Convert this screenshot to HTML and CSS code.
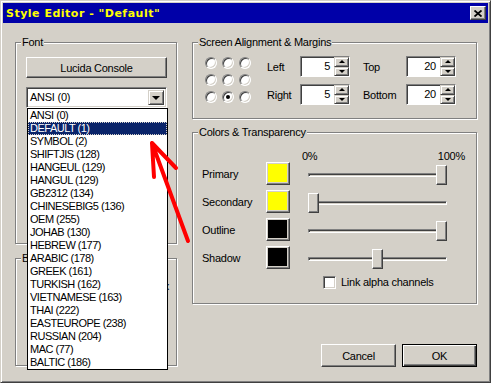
FILE: index.html
```html
<!DOCTYPE html>
<html>
<head>
    <title>Style Editor</title>
    <link rel="stylesheet" href="styles.css">
</head>
<body>
    <div class="window">
        <div class="titlebar">
            <span class="title">Style Editor - "Default"</span>
            <button class="close" type="button">
                <svg width="8" height="7" viewBox="0 0 8 7"><path d="M0.5 0.5l7 6M7.5 0.5l-7 6" stroke="#000" stroke-width="1.8"/></svg>
            </button>
        </div>

        <div class="client">
            <div class="col-left">
                <div class="group font-group">
                    <span class="group-title">Font</span>
                    <button class="btn font-btn" type="button">Lucida Console</button>
                    <div class="combo">
                        <span class="combo-value">ANSI (0)</span>
                        <span class="combo-arrow"><i class="tri-down"></i></span>
                    </div>
                </div>
                <div class="group border-group">
                    <span class="group-title">Border Style</span>
                    <div class="border-row"><span>Opaque box</span></div>
                </div>
            </div>

            <div class="col-right">
                <div class="group screen-group">
                    <span class="group-title">Screen Alignment &amp; Margins</span>
                    <div class="radio-grid">
                        <span class="radio"></span><span class="radio"></span><span class="radio"></span>
                        <span class="radio"></span><span class="radio"></span><span class="radio"></span>
                        <span class="radio"></span><span class="radio checked"></span><span class="radio"></span>
                    </div>
                    <div class="spin-grid">
                        <span class="lbl">Left</span>
                        <div class="spin"><span class="spin-value">5</span><span class="spin-btns"><span class="spin-btn"><i class="tri-up"></i></span><span class="spin-btn"><i class="tri-dn"></i></span></span></div>
                        <span class="lbl lbl-2">Top</span>
                        <div class="spin"><span class="spin-value">20</span><span class="spin-btns"><span class="spin-btn"><i class="tri-up"></i></span><span class="spin-btn"><i class="tri-dn"></i></span></span></div>
                        <span class="lbl">Right</span>
                        <div class="spin"><span class="spin-value">5</span><span class="spin-btns"><span class="spin-btn"><i class="tri-up"></i></span><span class="spin-btn"><i class="tri-dn"></i></span></span></div>
                        <span class="lbl lbl-2">Bottom</span>
                        <div class="spin"><span class="spin-value">20</span><span class="spin-btns"><span class="spin-btn"><i class="tri-up"></i></span><span class="spin-btn"><i class="tri-dn"></i></span></span></div>
                    </div>
                </div>

                <div class="group colors-group">
                    <span class="group-title">Colors &amp; Transparency</span>
                    <div class="pct-row"><span>0%</span><span>100%</span></div>
                    <div class="color-rows">
                        <div class="color-row">
                            <span class="color-name">Primary</span>
                            <span class="swatch"><i style="background: #ffff00"></i></span>
                            <div class="slider"><span class="track"></span><span class="thumb" style="left: 128px"></span></div>
                        </div>
                        <div class="color-row">
                            <span class="color-name">Secondary</span>
                            <span class="swatch"><i style="background: #ffff00"></i></span>
                            <div class="slider"><span class="track"></span><span class="thumb" style="left: 0px"></span></div>
                        </div>
                        <div class="color-row">
                            <span class="color-name">Outline</span>
                            <span class="swatch"><i style="background: #000000"></i></span>
                            <div class="slider"><span class="track"></span><span class="thumb" style="left: 128px"></span></div>
                        </div>
                        <div class="color-row">
                            <span class="color-name">Shadow</span>
                            <span class="swatch"><i style="background: #000000"></i></span>
                            <div class="slider"><span class="track"></span><span class="thumb" style="left: 64px"></span></div>
                        </div>
                    </div>
                    <label class="check-row"><span class="checkbox"></span>Link alpha channels</label>
                </div>

                <div class="dialog-buttons">
                    <button class="btn" type="button">Cancel</button>
                    <button class="btn default" type="button">OK</button>
                </div>
            </div>
        </div>

        <ul class="dropdown">
            <li>ANSI (0)</li>
            <li class="selected">DEFAULT (1)</li>
            <li>SYMBOL (2)</li>
            <li>SHIFTJIS (128)</li>
            <li>HANGEUL (129)</li>
            <li>HANGUL (129)</li>
            <li>GB2312 (134)</li>
            <li>CHINESEBIG5 (136)</li>
            <li>OEM (255)</li>
            <li>JOHAB (130)</li>
            <li>HEBREW (177)</li>
            <li>ARABIC (178)</li>
            <li>GREEK (161)</li>
            <li>TURKISH (162)</li>
            <li>VIETNAMESE (163)</li>
            <li>THAI (222)</li>
            <li>EASTEUROPE (238)</li>
            <li>RUSSIAN (204)</li>
            <li>MAC (77)</li>
            <li>BALTIC (186)</li>
        </ul>

        <!-- red annotation arrow -->
        <svg class="arrow" width="491" height="383" viewBox="0 0 491 383">
            <path d="M187 240L151 142M151 142L153 176M151 142L175 167" fill="none" stroke="#ff0000" stroke-width="4" stroke-linecap="round" stroke-linejoin="round"/>
        </svg>
    </div>
</body>
</html>
```

FILE: styles.css
```css
* { margin: 0; padding: 0; box-sizing: border-box; }
body { font-family: 'Liberation Sans', Arial, sans-serif; font-size: 11px; letter-spacing: -0.25px; color: #000; background: #d4d0c8; }
button { font: inherit; color: inherit; letter-spacing: inherit; }

/* window frame */
.window { position: relative; width: 491px; height: 383px; background: #d4d0c8; border: 1px solid; border-color: #d4d0c8 #404040 #404040 #d4d0c8; box-shadow: inset 1px 1px #fff, inset -1px -1px #808080; padding: 2px; }
.titlebar { height: 20px; background: #0000a8; display: flex; align-items: center; justify-content: space-between; padding: 0 2px 0 3px; }
.title { color: #ffff00; font-family: 'DejaVu Sans', sans-serif; font-weight: bold; font-size: 11px; letter-spacing: 0.5px; }
.close { width: 16px; height: 14px; background: #d4d0c8; border: 1px solid; border-color: #fff #404040 #404040 #fff; box-shadow: inset -1px -1px #808080; display: flex; align-items: center; justify-content: center; }

.client { display: flex; padding: 19px 0 0 12px; }
.col-left { width: 162px; }
.col-right { width: 285px; margin-left: 15px; }

/* group boxes */
.group { position: relative; border: 1px solid #808080; box-shadow: inset 1px 1px #fff, 1px 1px #fff; }
.group-title { position: absolute; top: -7px; left: 5px; padding: 0 1px; background: #d4d0c8; line-height: 13px; white-space: nowrap; }

/* classic controls */
.btn { height: 23px; width: 75px; background: #d4d0c8; border: 1px solid; border-color: #fff #404040 #404040 #fff; box-shadow: inset -1px -1px #808080; }
.btn.default { border-color: #000; box-shadow: inset 1px 1px #fff, inset -1px -1px #404040, inset -2px -2px #808080; }

.font-group { height: 202px; padding: 14px 9px 0 10px; }
.font-btn { display: block; width: 141px; height: 21px; }
.combo { display: flex; height: 21px; margin-top: 9px; background: #fff; border: 1px solid; border-color: #808080 #fff #fff #808080; box-shadow: inset 1px 1px #404040, inset -1px -1px #d4d0c8; padding: 2px; }
.combo-value { flex: 1; padding-left: 1px; line-height: 15px; }
.combo-arrow { width: 16px; background: #d4d0c8; border: 1px solid; border-color: #d4d0c8 #404040 #404040 #d4d0c8; box-shadow: inset 1px 1px #fff, inset -1px -1px #808080; display: flex; align-items: center; justify-content: center; }
.tri-down { width: 0; height: 0; border-left: 4px solid transparent; border-right: 4px solid transparent; border-top: 4px solid #000; }

.border-group { height: 108px; margin-top: 14px; padding: 21px 7px 0 10px; }
.border-row { display: flex; justify-content: flex-end; line-height: 13px; }

/* screen alignment */
.screen-group { height: 77px; display: flex; padding: 13px 0 0 12px; }
.radio-grid { display: grid; grid-template-columns: repeat(3, 12px); grid-auto-rows: 12px; gap: 5px; margin-top: 1px; }
.radio { position: relative; width: 12px; height: 12px; border-radius: 50%; background: #fff; border: 1px solid; border-color: #808080 #fff #fff #808080; box-shadow: inset 1px 1px #404040, inset -1px -1px #d4d0c8; }
.radio.checked::after { content: ''; position: absolute; left: 3px; top: 3px; width: 4px; height: 4px; border-radius: 50%; background: #000; }
.spin-grid { display: grid; grid-template-columns: 33px 50px 56px 50px; grid-auto-rows: 21px; row-gap: 7px; margin-left: 16px; align-items: center; }
.lbl-2 { padding-left: 13px; }
.spin { display: flex; height: 21px; border: 1px solid; border-color: #808080 #fff #fff #808080; }
.spin-value { flex: 1; background: #fff; box-shadow: inset 1px 1px #404040; text-align: right; padding-right: 4px; line-height: 19px; }
.spin-btns { width: 15px; display: flex; flex-direction: column; }
.spin-btn { flex: 1; background: #d4d0c8; border: 1px solid; border-color: #d4d0c8 #404040 #404040 #d4d0c8; box-shadow: inset 1px 1px #fff, inset -1px -1px #808080; display: flex; align-items: center; justify-content: center; }
.tri-up { width: 0; height: 0; border-left: 3px solid transparent; border-right: 3px solid transparent; border-bottom: 3px solid #000; }
.tri-dn { width: 0; height: 0; border-left: 3px solid transparent; border-right: 3px solid transparent; border-top: 3px solid #000; }

/* colors */
.colors-group { height: 172px; margin-top: 13px; padding: 17px 0 0 9px; }
.pct-row { display: flex; justify-content: space-between; width: 163px; margin-left: 100px; line-height: 12px; }
.color-rows { display: flex; flex-direction: column; gap: 5px; }
.color-row { display: flex; height: 23px; align-items: center; }
.color-name { width: 64px; }
.swatch { width: 24px; height: 23px; display: flex; background: #d4d0c8; border: 1px solid; border-color: #fff #404040 #404040 #fff; box-shadow: inset -1px -1px #808080; padding: 1px 2px 2px 1px; }
.swatch i { flex: 1; }
.slider { position: relative; width: 139px; height: 20px; margin-left: 18px; align-self: flex-end; display: flex; align-items: center; }
.track { flex: 1; height: 4px; border: 1px solid; border-color: #808080 #fff #fff #808080; box-shadow: inset 1px 1px #404040; }
.thumb { position: absolute; top: 0; width: 11px; height: 20px; background: #d4d0c8; border: 1px solid; border-color: #fff #404040 #404040 #fff; box-shadow: inset -1px -1px #808080; }
.check-row { display: flex; align-items: center; gap: 5px; margin: 7px 0 0 121px; line-height: 13px; }
.checkbox { width: 13px; height: 13px; background: #fff; border: 1px solid; border-color: #808080 #fff #fff #808080; box-shadow: inset 1px 1px #404040, inset -1px -1px #d4d0c8; }

.dialog-buttons { display: flex; justify-content: flex-end; gap: 6px; margin-top: 40px; }

/* open charset list */
.dropdown { position: absolute; left: 26px; top: 107px; width: 141px; border: 1px solid #000; background: #fff; list-style: none; letter-spacing: -0.5px; }
.dropdown li { height: 13px; line-height: 13px; padding-left: 2px; white-space: nowrap; }
.dropdown li.selected { background: #0a246a; color: #fff; outline: 1px dotted #d4d0c8; outline-offset: -1px; }

.arrow { position: absolute; left: 0; top: 0; pointer-events: none; }
```
